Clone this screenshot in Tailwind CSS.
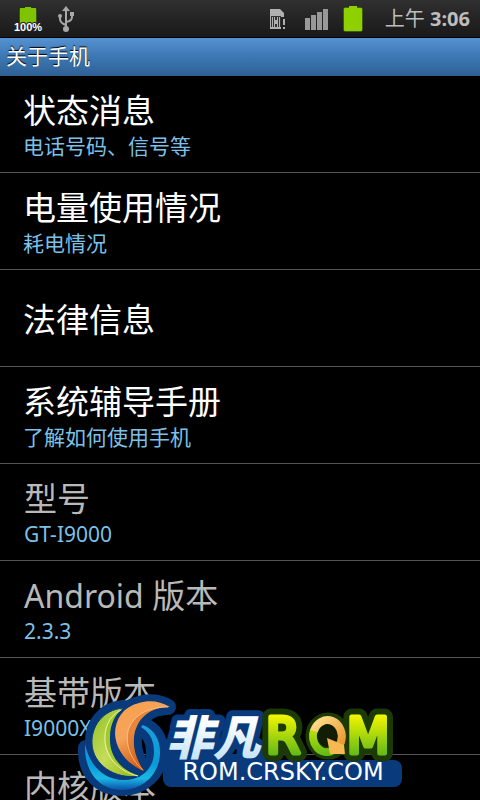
<!DOCTYPE html>
<html lang="zh-CN">

<head>
    <meta charset="UTF-8">
    <meta name="viewport" content="width=device-width, initial-scale=1.0">
    <script src="https://cdn.jsdelivr.net/npm/@tailwindcss/browser@4"></script>
    <title>关于手机</title>
</head>

<body class="bg-black font-['Noto_Sans','Noto_Sans_CJK_SC',sans-serif]">
    <div class="relative h-screen overflow-hidden">
        <!-- Status bar -->
        <div class="flex h-[38px] items-center justify-between border-b border-black bg-linear-to-b from-[#303030] to-[#191919] pr-2.5 pl-3">
            <div class="flex items-center gap-3">
                <svg class="h-8 w-8" viewBox="0 0 32 32" role="img" aria-label="100%">
                    <rect x="7" y="5" width="18" height="20" rx="3" fill="#5a9c00" opacity=".4" />
                    <path d="M13 4h6v1h5v19H8V5h5z" fill="#7fc400" />
                    <text x="2" y="28" font-family="Liberation Sans" font-size="11" font-weight="bold" fill="#fff"
                        stroke="#222" stroke-width="2" paint-order="stroke">100%</text>
                </svg>
                <svg class="h-7 w-5" viewBox="0 0 20 28" fill="none" stroke="#a8a8a8" stroke-width="2">
                    <path d="M10 24V4M10 20q-6-2-6-6v-3M10 17q6-1 6-5V9" />
                    <path d="M10 1l4 5H6z" fill="#a8a8a8" stroke="none" />
                    <circle cx="10" cy="24" r="3" fill="#a8a8a8" stroke="none" />
                    <circle cx="4" cy="11" r="2" fill="#a8a8a8" stroke="none" />
                    <path d="M14 7h4v4h-4z" fill="#a8a8a8" stroke="none" />
                </svg>
            </div>
            <div class="flex items-center text-[#bebebe]">
                <svg class="mr-5 h-6 w-4" viewBox="0 0 16 24">
                    <path d="M1 2h10l4 4v4h-3v12H1z" fill="#b0b0b0" />
                    <path d="M2 9h10v12H2z" fill="#333" />
                    <path d="M3.500 10v10M10.500 10v10M5.500 10v3M8.500 10v3M5.500 17v3M8.500 17v3M2 20.500h10" stroke="#b0b0b0" />
                    <path d="M5 13h4v4H5zM14 12h2v6h-2zM14 20h2v2h-2z" fill="#b0b0b0" />
                </svg>
                <svg class="mr-3 h-6 w-6" viewBox="0 0 24 24" fill="#999">
                    <path d="M0 11h5v12H0zM6 8h5v15H6zM12 5h5v18h-5zM18 2h5v21h-5z" />
                </svg>
                <svg class="mr-5 h-8 w-6" viewBox="0 0 24 32">
                    <rect x="2" y="4" width="20" height="25" rx="3" fill="#5a9c00" opacity=".5" />
                    <path d="M8 3h8v2h4q1 0 1 1v21q0 1-1 1H4q-1 0-1-1V6q0-1 1-1h4z" fill="#8fd000" />
                </svg>
                <span class="text-xl">上午 <b>3:06</b></span>
            </div>
        </div>

        <!-- Title bar -->
        <h1 class="flex h-[38px] items-center border-b border-[#345f8c] bg-linear-to-b from-[#5592d0] via-[#3d78b4] to-[#2e6296] px-1.5 text-[21px] text-white text-shadow-[0_-1px_1px_#000]">关于手机</h1>

        <!-- Settings list -->
        <ul>
            <li class="flex h-[97px] flex-col justify-center border-b border-[#555] px-[23px] pt-1 text-white">
                <span class="text-[33px] leading-10">状态消息</span>
                <span class="text-[21px] leading-[30px] text-[#7cc0e8]">电话号码、信号等</span>
            </li>
            <li class="flex h-[97px] flex-col justify-center border-b border-[#555] px-[23px] pt-1 text-white">
                <span class="text-[33px] leading-10">电量使用情况</span>
                <span class="text-[21px] leading-[30px] text-[#7cc0e8]">耗电情况</span>
            </li>
            <li class="flex h-[97px] flex-col justify-center border-b border-[#555] px-[23px] pt-1 text-white">
                <span class="text-[33px] leading-10">法律信息</span>
            </li>
            <li class="flex h-[97px] flex-col justify-center border-b border-[#555] px-[23px] pt-1 text-white">
                <span class="text-[33px] leading-10">系统辅导手册</span>
                <span class="text-[21px] leading-[30px] text-[#7cc0e8]">了解如何使用手机</span>
            </li>
            <li class="flex h-[97px] flex-col justify-center border-b border-[#555] px-6 pt-1 text-[#b9b9b9]">
                <span class="text-[33px] leading-10">型号</span>
                <span class="text-[21px] leading-[30px] text-[#7cc0e8]">GT-I9000</span>
            </li>
            <li class="flex h-[97px] flex-col justify-center border-b border-[#555] px-6 pt-1 text-[#b9b9b9]">
                <span class="text-[33px] leading-10"><span class="text-[32px]">Android</span> 版本</span>
                <span class="text-[21px] leading-[30px] text-[#7cc0e8]">2.3.3</span>
            </li>
            <li class="flex h-[97px] flex-col justify-center border-b border-[#555] px-6 pt-1 text-[#b9b9b9]">
                <span class="text-[33px] leading-10">基带版本</span>
                <span class="text-[21px] leading-[30px] text-[#7cc0e8]">I9000X</span>
            </li>
            <li class="px-6 pt-3 text-[#b9b9b9]">
                <span class="text-[33px] leading-10">内核版本</span>
            </li>
        </ul>

        <!-- Site badge over the list -->
        <svg class="absolute bottom-0 left-1/2 h-[108px] w-[324px] -translate-x-1/2" viewBox="0 0 324 108">
            <defs>
                <linearGradient id="ring" x1="0" y1="0" x2="0" y2="1">
                    <stop offset="0" stop-color="#1aa0dc" />
                    <stop offset=".6" stop-color="#0a9ad8" />
                    <stop offset=".82" stop-color="#19b8e4" />
                    <stop offset="1" stop-color="#0b4fa8" />
                </linearGradient>
                <linearGradient id="leaf" x1="0" y1="0" x2="1" y2="1">
                    <stop offset="0" stop-color="#8fbf22" />
                    <stop offset=".5" stop-color="#c5dc5a" />
                    <stop offset="1" stop-color="#8ab80c" />
                </linearGradient>
                <linearGradient id="flame" x1="0" y1="0" x2=".4" y2="1">
                    <stop offset="0" stop-color="#f9a04a" />
                    <stop offset=".5" stop-color="#f6a45c" />
                    <stop offset="1" stop-color="#d2560c" />
                </linearGradient>
                <linearGradient id="ice" x1="0" y1="0" x2="0" y2="1">
                    <stop offset=".3" stop-color="#fff" />
                    <stop offset="1" stop-color="#b5dcf6" />
                </linearGradient>
                <linearGradient id="lime" gradientUnits="userSpaceOnUse" x1="0" y1="23" x2="0" y2="64">
                    <stop offset="0" stop-color="#f2f600" />
                    <stop offset="1" stop-color="#5fb818" />
                </linearGradient>
                <linearGradient id="gold" x1="0" y1="0" x2="1" y2="1">
                    <stop offset="0" stop-color="#ffe08c" />
                    <stop offset="1" stop-color="#e8952a" />
                </linearGradient>
            </defs>

            <!-- dark blue backing -->
            <g fill="none" stroke="#083a7c" stroke-width="16" stroke-linejoin="round">
                <path d="M65 33C77 38 82 48 82 60C82 80 65 96 44 96C22 96 7 81 8 56C12 70 22 88 46 88C64 88 76 76 76 60C76 50 73 41 63 35Z" />
                <path d="M45 16C25 18 14 34 15 52C16 72 36 88 62 84C40 78 30 62 31 44C32 30 38 21 45 16Z" />
                <path d="M90 15C82 10 71 9 61 12C45 16 37 27 37 42C38 60 52 74 66 79C57 66 55 55 56 45C58 28 70 15 90 15Z" />
            </g>
            <rect x="85" y="62" width="106" height="20" fill="#083a7c" />
            <rect x="85" y="68" width="239" height="27" rx="8" fill="#083a7c" />

            <path d="M65 33C77 38 82 48 82 60C82 82 65 98 44 98C22 98 6 81 7 52C10 68 22 88 46 88C64 88 76 76 76 60C76 50 73 41 63 35Z" fill="url(#ring)" />
            <path d="M45 16C25 18 13 34 14 52C15 72 36 88 62 84C40 78 30 62 31 44C32 30 38 21 45 16Z" fill="url(#leaf)" stroke="#083a7c" stroke-width="1" />
            <path d="M45 16C31 24 27 36 28 50C30 66 42 80 62 84C42 78 31 64 32 45C32 31 38 22 45 16Z" fill="#a3c928" />
            <path d="M43 18C30 25 26 37 27 50C29 66 40 79 60 84" fill="none" stroke="#e6f2a8" stroke-width="1" />
            <path d="M92 15C82 9 71 8 61 11C45 15 37 27 37 42C38 60 52 74 66 79C57 66 55 55 56 45C58 28 70 15 92 15Z" fill="url(#flame)" />
            <path d="M92 15C68 14 54 25 50 39C47 54 54 70 66 79C57 66 55 55 56 45C58 28 70 15 92 15Z" fill="#d9681c" opacity=".5" />
            <path d="M90 15C68 15 54 25 50 39C47 54 54 69 65 78" fill="none" stroke="#ffe0b8" stroke-width="1" opacity=".6" />

            <text x="88" y="63" font-family="Noto Sans CJK SC, sans-serif" font-size="47" font-weight="900" font-style="italic"
                fill="url(#ice)" stroke="#083a7c" stroke-width="12" stroke-linejoin="round" paint-order="stroke">非凡</text>

            <!-- dark green backing, then the letters -->
            <g font-family="DejaVu Sans, sans-serif" font-size="49" stroke-linejoin="round">
                <g fill="#1c3a06" stroke="#1c3a06" stroke-width="17">
                    <text x="188" y="61">R</text>
                    <text x="269" y="61">M</text>
                    <ellipse cx="250" cy="44" rx="14" ry="15" />
                </g>
                <g fill="url(#lime)" stroke="url(#lime)" stroke-width="5">
                    <text x="188" y="61">R</text>
                    <text x="269" y="61">M</text>
                </g>
            </g>
            <ellipse cx="250" cy="43" rx="11" ry="12" fill="#111d05" />
            <path d="M236 38A14 16 0 0 0 254 59" fill="none" stroke="url(#lime)" stroke-width="8" />
            <path d="M236 39A14 16 0 0 1 263 50L260 55" fill="none" stroke="url(#gold)" stroke-width="8" />
            <path d="M249 46L266 53L267 62H252Z" fill="#f6b850" />

            <text x="205" y="88" text-anchor="middle" font-family="DejaVu Sans, sans-serif" font-size="24" fill="#fff">ROM.CRSKY.COM</text>
        </svg>
    </div>
</body>

</html>
